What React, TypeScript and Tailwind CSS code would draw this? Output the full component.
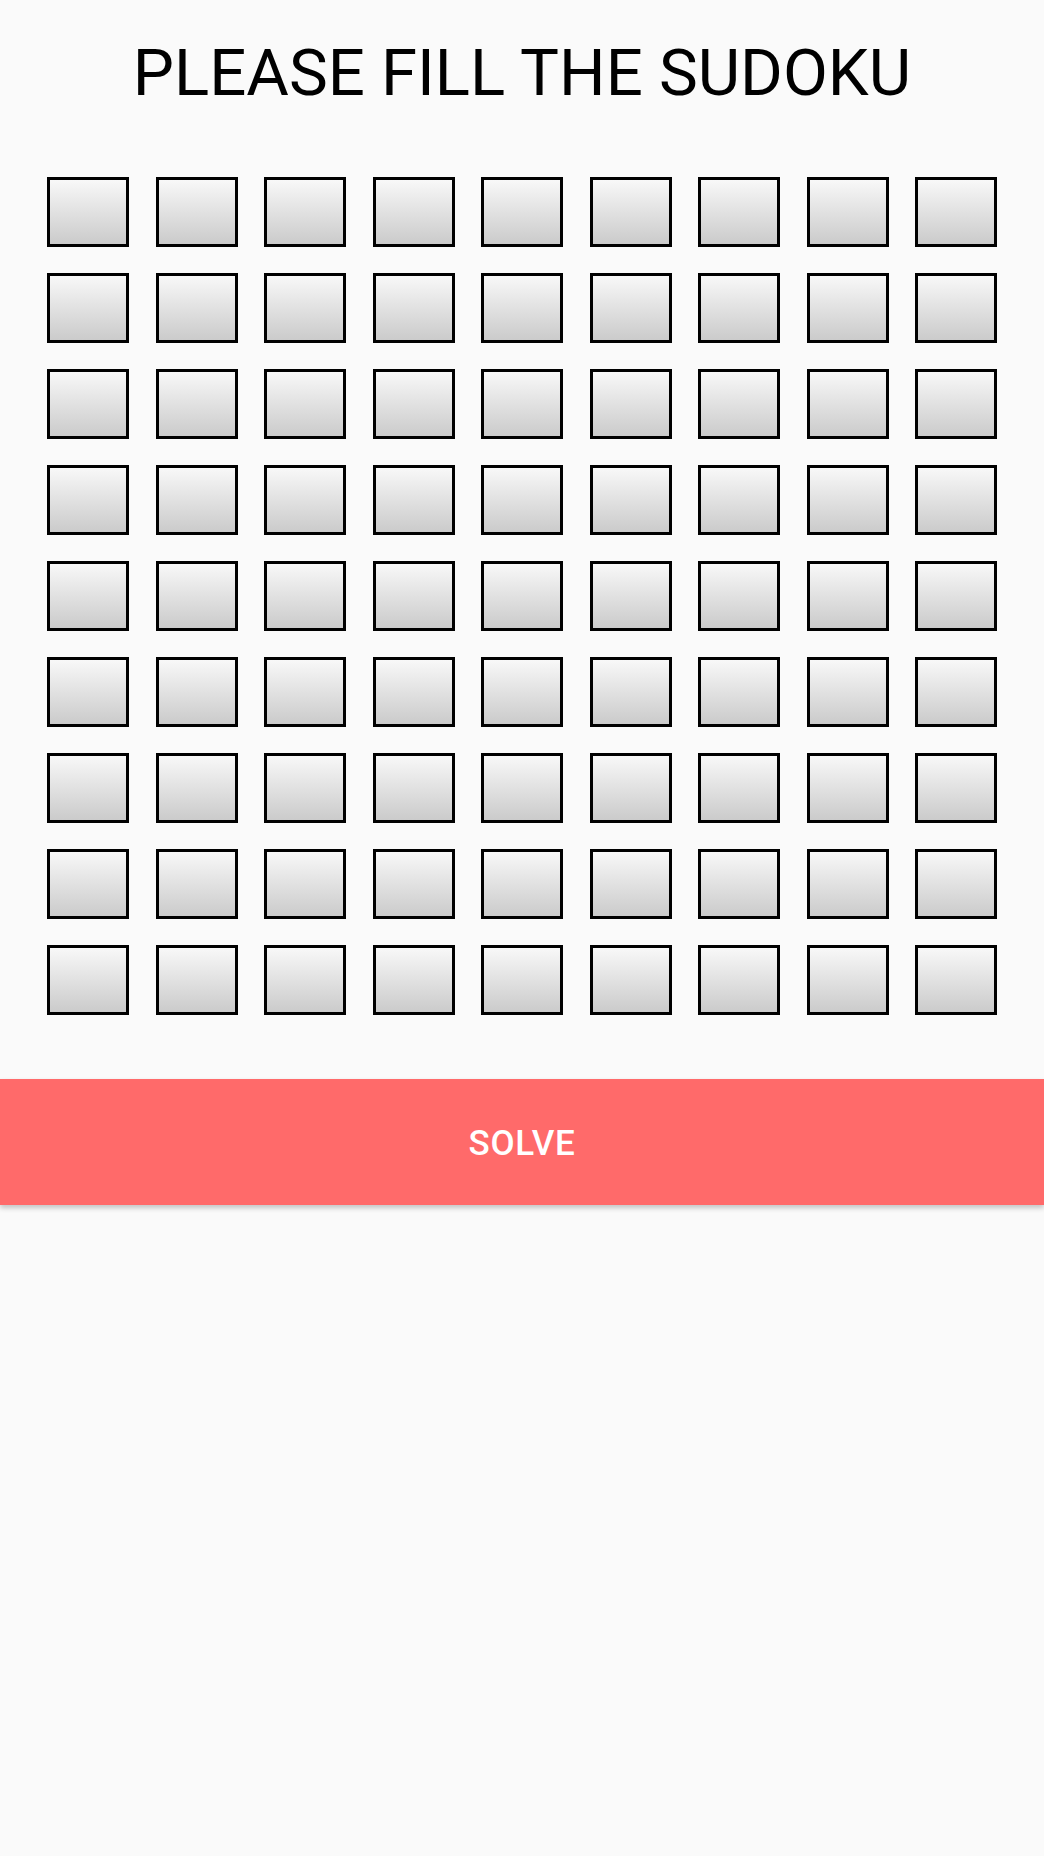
const ROWS = 9;
const COLS = 9;

const Cell = () => (
  <div className="h-[70px] w-[82px] border-[3px] border-black bg-gradient-to-b from-[#f8f8f8] to-[#cbcbcb]" />
);

export default function App() {
  const cells = Array.from({ length: ROWS * COLS }, (_, i) => i);

  return (
    <div className="min-h-[1856px] w-full bg-[#fafafa] font-['Roboto',sans-serif]">
      <h1 className="pt-[34px] text-center text-[65.3px] font-normal leading-[77px] text-black">
        PLEASE FILL THE SUDOKU
      </h1>

      {/* board */}
      <div className="mt-[66px] flex justify-center">
        <div className="grid w-[950px] grid-cols-[repeat(9,82px)] gap-x-[26.5px] gap-y-[26px]">
          {cells.map((i) => (
            <Cell key={i} />
          ))}
        </div>
      </div>

      <button className="mt-[64px] flex h-[126px] w-full items-center justify-center bg-[#ff6a6a] pt-[5px] text-[35px] font-medium tracking-[0.02em] text-white shadow-[0_3px_5px_rgba(0,0,0,0.22)]">
        SOLVE
      </button>
    </div>
  );
}
